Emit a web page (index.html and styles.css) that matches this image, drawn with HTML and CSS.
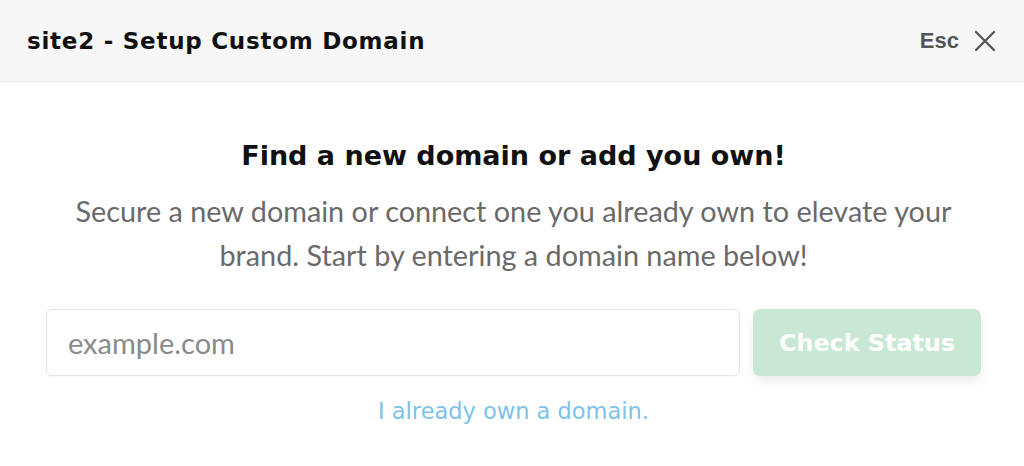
FILE: index.html
```html
<!DOCTYPE html>
<html>
<head>
<meta charset="utf-8">
<link rel="stylesheet" href="styles.css">
</head>
<body>
<div class="modal">
  <header class="modal-header">
    <h1 class="title">site2 - Setup Custom Domain</h1>
    <div class="close">
      <span class="esc">Esc</span>
      <svg class="x-icon" width="22" height="22" viewBox="0 0 22 22"><path d="M2 2 L20 20 M20 2 L2 20" stroke="#555" stroke-width="2.3" stroke-linecap="round" fill="none"/></svg>
    </div>
  </header>
  <main class="modal-body">
    <h2 class="heading">Find a new domain or add you own!</h2>
    <p class="desc">Secure a new domain or connect one you already own to elevate your brand. Start by entering a domain name below!</p>
    <div class="search-row">
      <input class="domain-input" type="text" placeholder="example.com">
      <button class="check-btn">Check Status</button>
    </div>
    <a class="own-link" href="#">I already own a domain.</a>
  </main>
</div>
</body>
</html>
```

FILE: styles.css
```css
* { box-sizing: border-box; }
html, body { margin: 0; padding: 0; background: #fff; }
body { width: 1024px; height: 466px; overflow: hidden; }
.modal { width: 1024px; height: 466px; display: flex; flex-direction: column; }
.modal-header {
  height: 82px;
  flex: none;
  background: #f7f7f7;
  border-bottom: 1px solid #e6e6e6;
  display: flex;
  align-items: center;
  justify-content: space-between;
  padding: 0 28px 0 27px;
}
.title {
  margin: 0;
  font-family: "DejaVu Sans", "Liberation Sans", sans-serif;
  font-weight: 700;
  font-size: 23px;
  letter-spacing: 0.75px;
  color: #111;
}
.close { display: flex; align-items: center; gap: 15px; }
.esc {
  font-family: "Liberation Sans", Arial, sans-serif;
  font-weight: 700;
  font-size: 22px;
  color: #555;
}
.x-icon { display: block; }
.modal-body {
  display: flex;
  flex-direction: column;
  align-items: center;
  padding: 56px 43px 0 46px;
}
.heading {
  margin: 0;
  font-family: "DejaVu Sans", "Liberation Sans", sans-serif;
  font-weight: 700;
  font-size: 27px;
  color: #111;
  line-height: 36px;
}
.desc {
  margin: 15px 0 0;
  width: 900px;
  text-align: center;
  font-family: "Lato", "Open Sans", sans-serif;
  font-size: 28.8px;
  line-height: 44px;
  color: #6a6a6a;
}
.search-row {
  margin-top: 32px;
  width: 100%;
  display: flex;
  gap: 13px;
}
.domain-input {
  flex: 1;
  height: 67px;
  border: 1px solid #e4e4e4;
  border-radius: 6px;
  padding: 0 21px;
  font-family: "Lato", "Open Sans", sans-serif;
  font-size: 29px;
  color: #333;
  background: #fff;
  box-shadow: 0 1px 2px rgba(0,0,0,0.04);
  outline: none;
}
.domain-input::placeholder { color: #8a8a8a; }
.check-btn {
  width: 228px;
  height: 67px;
  border: none;
  border-radius: 7px;
  background: #c8e8d3;
  color: #fff;
  font-family: "DejaVu Sans", "Liberation Sans", sans-serif;
  font-weight: 700;
  font-size: 23.8px;
  box-shadow: 0 6px 12px rgba(0,0,0,0.07);
}
.own-link {
  margin-top: 20px;
  font-family: "DejaVu Sans", "Liberation Sans", sans-serif;
  font-size: 22.5px;
  line-height: 30px;
  color: #7cc3ea;
  text-decoration: none;
}
```
